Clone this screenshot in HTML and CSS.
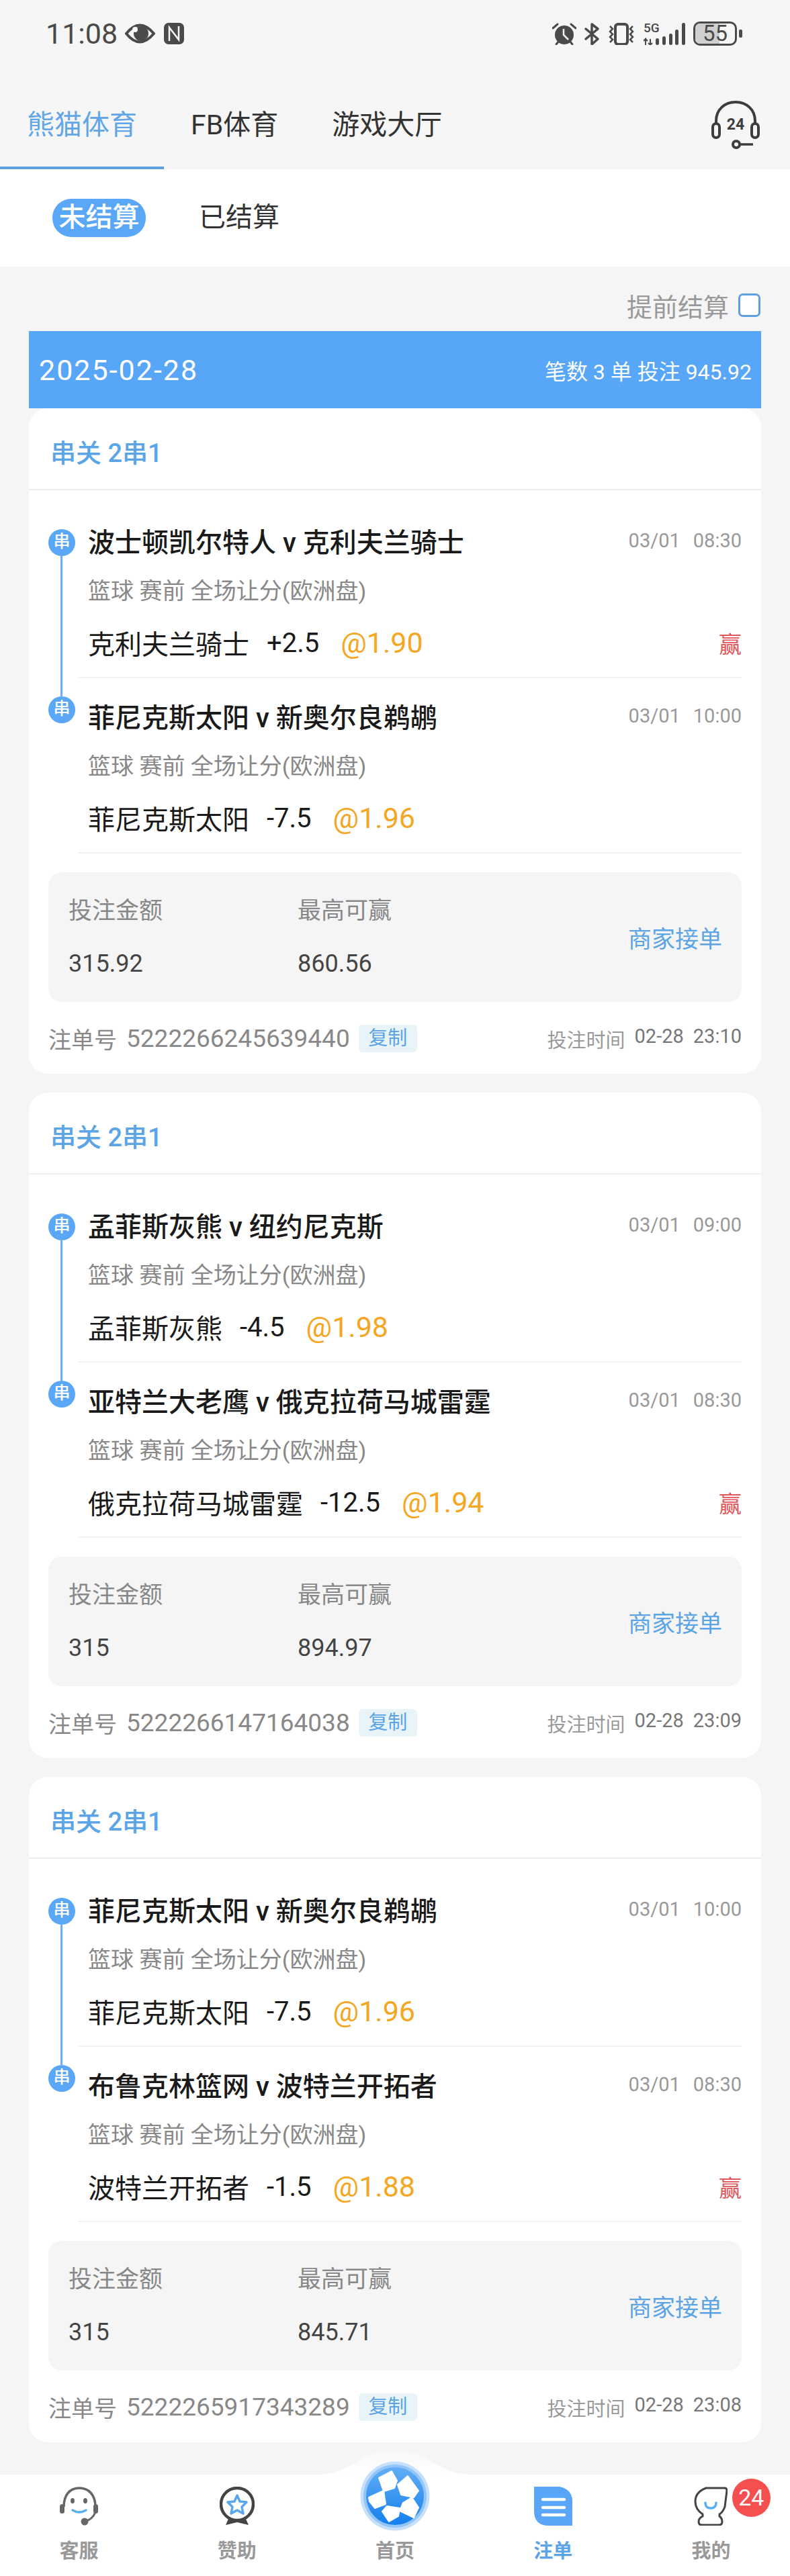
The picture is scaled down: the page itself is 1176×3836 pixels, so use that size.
FILE: index.html
```html
<!DOCTYPE html>
<html lang="zh-CN">
	<head>
		<title>注单</title>
		<meta charset="utf-8">
		<meta name="viewport" content="width=device-width, user-scalable=no, minimum-scale=1.0, maximum-scale=1.0">
		<link rel="stylesheet" href="styles.css">
	</head>

	<body>
		<div id="page">

			<div class="status">
				<span class="clock">11:08</span>
				<svg class="ico-eye" viewBox="0 0 45 32"><path d="M2 16 Q22 -9 43 16 Q22 41 2 16 Z" fill="none" stroke="#4a4a4a" stroke-width="4"/><circle cx="24" cy="16" r="11" fill="#4a4a4a"/><circle cx="15" cy="10" r="4" fill="#f6f6f6"/></svg>
				<svg class="ico-nfc" viewBox="0 0 30 32"><rect width="30" height="32" rx="7" fill="#4a4a4a"/><path d="M8 27 V7 L22 25 V5" fill="none" stroke="#f6f6f6" stroke-width="2.5"/></svg>
				<div class="status-right">
					<svg class="ico-alarm" viewBox="0 0 36 33"><circle cx="18" cy="18" r="14" fill="#4a4a4a"/><path d="M17 9 V18 L24 25" fill="none" stroke="#f6f6f6" stroke-width="2.5"/><path d="M1 8 L8 2 M35 8 L28 2 M6 32 L10 27 M30 32 L26 27" stroke="#4a4a4a" stroke-width="3" stroke-linecap="round"/></svg>
					<svg class="ico-bt" viewBox="0 0 22 33"><path d="M2 9 L20 24 L11 32 V2 L20 9 L2 24" fill="none" stroke="#4a4a4a" stroke-width="3.5" stroke-linejoin="round" stroke-linecap="round"/></svg>
					<svg class="ico-vibe" viewBox="0 0 40 33"><rect x="11" y="2" width="18" height="30" rx="4" fill="none" stroke="#4a4a4a" stroke-width="4"/><path d="M3 5 L7 9 L3 13 L7 17 L3 21 L7 25 L3 29 M37 5 L33 9 L37 13 L33 17 L37 21 L33 25 L37 29" fill="none" stroke="#4a4a4a" stroke-width="2.5"/></svg>
					<div class="signal">
						<span class="signal-g">5G</span>
						<svg viewBox="0 0 64 33"><path d="M3 33 V24 L0 27 M3 24 L6 27 M10 24 V33 L7 30 M10 33 L13 30" fill="none" stroke="#4a4a4a" stroke-width="2"/><g fill="#4a4a4a"><rect x="18" y="23" width="5" height="10" rx="2.5"/><rect x="28" y="20" width="5" height="13" rx="2.5"/><rect x="38" y="16" width="5" height="17" rx="2.5"/><rect x="47" y="10" width="5" height="23" rx="2.5"/><rect x="57" y="0" width="5" height="33" rx="2.5"/></g></svg>
					</div>
					<div class="batt"><div class="batt-fill"></div><span>55</span></div>
				</div>
			</div>

			<div class="tabs">
				<div class="tab active">熊猫体育</div>
				<div class="tab">FB体育</div>
				<div class="tab">游戏大厅</div>
				<svg class="ico-service" viewBox="0 0 72 72">
					<path d="M7 36 V30 C7 13 20 2 36 2 C52 2 65 13 65 30 V36" fill="none" stroke="#3d3d3d" stroke-width="4"/>
					<rect x="2" y="34" width="10" height="21" rx="5" fill="none" stroke="#3d3d3d" stroke-width="4"/>
					<rect x="60" y="34" width="10" height="21" rx="5" fill="none" stroke="#3d3d3d" stroke-width="4"/>
					<text x="36" y="43" class="ico-24">24</text>
					<circle cx="37" cy="65" r="5" fill="none" stroke="#3d3d3d" stroke-width="4"/>
					<path d="M42 65 H62" stroke="#3d3d3d" stroke-width="3.5"/>
				</svg>
			</div>

			<div class="segment">
				<span class="seg on">未结算</span>
				<span class="seg">已结算</span>
			</div>

			<div class="early">
				<span>提前结算</span>
				<i class="check"></i>
			</div>

			<div class="list">
				<div class="band">
					<span class="band-date">2025-02-28</span>
					<span class="band-sum">笔数 3 单 投注 945.92</span>
				</div>

				<div class="card">
					<div class="card-head">串关 2串1</div>
					<div class="legs">
						<div class="leg leg-first">
							<b class="dot">串</b>
							<div class="row"><span class="match">波士顿凯尔特人 v 克利夫兰骑士</span><span class="when"><span>03/01</span><span>08:30</span></span></div>
							<div class="market">篮球 赛前 全场让分(欧洲盘)</div>
							<div class="row"><span class="pick"><span>克利夫兰骑士</span><span>+2.5</span><em>@1.90</em></span><span class="won">赢</span></div>
						</div>
						<div class="leg leg-last">
							<b class="dot">串</b>
							<div class="row"><span class="match">菲尼克斯太阳 v 新奥尔良鹈鹕</span><span class="when"><span>03/01</span><span>10:00</span></span></div>
							<div class="market">篮球 赛前 全场让分(欧洲盘)</div>
							<div class="row"><span class="pick"><span>菲尼克斯太阳</span><span>-7.5</span><em>@1.96</em></span></div>
						</div>
					</div>
					<div class="box">
						<div class="col"><span class="col-label">投注金额</span><span class="col-value">315.92</span></div>
						<div class="col"><span class="col-label">最高可赢</span><span class="col-value">860.56</span></div>
						<span class="seller">商家接单</span>
					</div>
					<div class="foot">
						<span class="foot-label">注单号</span><span class="foot-no">5222266245639440</span><span class="copy">复制</span>
						<span class="foot-time"><span>投注时间</span><span>02-28</span><span>23:10</span></span>
					</div>
				</div>

				<div class="card">
					<div class="card-head">串关 2串1</div>
					<div class="legs">
						<div class="leg leg-first">
							<b class="dot">串</b>
							<div class="row"><span class="match">孟菲斯灰熊 v 纽约尼克斯</span><span class="when"><span>03/01</span><span>09:00</span></span></div>
							<div class="market">篮球 赛前 全场让分(欧洲盘)</div>
							<div class="row"><span class="pick"><span>孟菲斯灰熊</span><span>-4.5</span><em>@1.98</em></span></div>
						</div>
						<div class="leg leg-last">
							<b class="dot">串</b>
							<div class="row"><span class="match">亚特兰大老鹰 v 俄克拉荷马城雷霆</span><span class="when"><span>03/01</span><span>08:30</span></span></div>
							<div class="market">篮球 赛前 全场让分(欧洲盘)</div>
							<div class="row"><span class="pick"><span>俄克拉荷马城雷霆</span><span>-12.5</span><em>@1.94</em></span><span class="won">赢</span></div>
						</div>
					</div>
					<div class="box">
						<div class="col"><span class="col-label">投注金额</span><span class="col-value">315</span></div>
						<div class="col"><span class="col-label">最高可赢</span><span class="col-value">894.97</span></div>
						<span class="seller">商家接单</span>
					</div>
					<div class="foot">
						<span class="foot-label">注单号</span><span class="foot-no">5222266147164038</span><span class="copy">复制</span>
						<span class="foot-time"><span>投注时间</span><span>02-28</span><span>23:09</span></span>
					</div>
				</div>

				<div class="card">
					<div class="card-head">串关 2串1</div>
					<div class="legs">
						<div class="leg leg-first">
							<b class="dot">串</b>
							<div class="row"><span class="match">菲尼克斯太阳 v 新奥尔良鹈鹕</span><span class="when"><span>03/01</span><span>10:00</span></span></div>
							<div class="market">篮球 赛前 全场让分(欧洲盘)</div>
							<div class="row"><span class="pick"><span>菲尼克斯太阳</span><span>-7.5</span><em>@1.96</em></span></div>
						</div>
						<div class="leg leg-last">
							<b class="dot">串</b>
							<div class="row"><span class="match">布鲁克林篮网 v 波特兰开拓者</span><span class="when"><span>03/01</span><span>08:30</span></span></div>
							<div class="market">篮球 赛前 全场让分(欧洲盘)</div>
							<div class="row"><span class="pick"><span>波特兰开拓者</span><span>-1.5</span><em>@1.88</em></span><span class="won">赢</span></div>
						</div>
					</div>
					<div class="box">
						<div class="col"><span class="col-label">投注金额</span><span class="col-value">315</span></div>
						<div class="col"><span class="col-label">最高可赢</span><span class="col-value">845.71</span></div>
						<span class="seller">商家接单</span>
					</div>
					<div class="foot">
						<span class="foot-label">注单号</span><span class="foot-no">5222265917343289</span><span class="copy">复制</span>
						<span class="foot-time"><span>投注时间</span><span>02-28</span><span>23:08</span></span>
					</div>
				</div>
			</div>

			<div class="nav">
				<svg class="hump" viewBox="0 0 225 36"><defs><linearGradient id="humpfill" x1="0" y1="0" x2="0" y2="1"><stop offset="0" stop-color="#f8f8f8"/><stop offset="1" stop-color="#ffffff"/></linearGradient></defs><path d="M0 36 C45 36 62 0 112 0 C163 0 180 36 225 36 Z" fill="url(#humpfill)"/></svg>

				<div class="nav-item">
					<svg class="nav-ico" viewBox="0 0 58 58">
						<path d="M6 30 C6 12 15 2 29 2 C43 2 53 12 53 30" fill="none" stroke="#666" stroke-width="3.5"/>
						<rect x="0" y="26" width="7" height="14" rx="3.5" fill="#666"/>
						<rect x="50" y="26" width="7" height="14" rx="3.5" fill="#666"/>
						<path d="M53 38 C50 46 44 50 37 52" fill="none" stroke="#666" stroke-width="3"/>
						<circle cx="37" cy="52" r="5.5" fill="#666"/>
						<ellipse cx="19" cy="21" rx="3" ry="4" fill="#666"/>
						<ellipse cx="38" cy="21" rx="3" ry="4" fill="#666"/>
						<path d="M19 35 Q29 41 39 35" fill="none" stroke="#5ab0ec" stroke-width="3.5" stroke-linecap="round"/>
					</svg>
					<span>客服</span>
				</div>
				<div class="nav-item">
					<svg class="nav-ico" viewBox="0 0 52 58">
						<circle cx="26" cy="26" r="24" fill="none" stroke="#444" stroke-width="4.5"/>
						<path d="M26 13 L30 22 L40 23 L33 30 L35 40 L26 35 L17 40 L19 30 L12 23 L22 22 Z" fill="none" stroke="#5aa5ef" stroke-width="3.5" stroke-linejoin="round"/>
						<path d="M9 57 L14 46 L26 52 L38 46 L43 57 L26 53 Z" fill="#444"/>
					</svg>
					<span>赞助</span>
				</div>
				<div class="nav-item">
					<div class="nav-ico"></div>
					<svg class="ball" viewBox="-52 -52 104 104">
						<defs><linearGradient id="ballfill" x1="0" y1="0" x2="0" y2="1"><stop offset="0" stop-color="#62aef6"/><stop offset="1" stop-color="#1480ec"/></linearGradient></defs>
						<circle r="51.5" fill="#c6e0fb"/>
						<circle r="47" fill="#93c5f8"/>
						<circle r="43" fill="url(#ballfill)"/>
						<g fill="#fff" stroke="#fff" stroke-width="2" stroke-linejoin="round">
							<path d="M-24 -27 L-5 -37 L3 -23 L-1 -12 L-17 -7 Z"/>
							<path d="M4 -17 L19 -30 L35 -8 L28 2 L9 -2 Z"/>
							<path d="M-39 2 L-17 -8 L-14 12 L-30 18 L-38 8 Z"/>
							<path d="M-19 23 L-12 15 L7 18 L5 30 L-9 38 Z"/>
							<path d="M12 10 L25 2 L35 17 L28 32 L7 22 Z"/>
						</g>
					</svg>
					<span>首页</span>
				</div>
				<div class="nav-item on">
					<svg class="nav-ico" viewBox="0 0 57 58">
						<path d="M0 0 H38 Q57 4 57 22 V58 H22 Q0 58 0 36 Z" fill="#59a6f8"/>
						<path d="M13 19 H45 M13 31 H45 M13 42 H45" stroke="#fff" stroke-width="4.5" stroke-linecap="round"/>
					</svg>
					<span>注单</span>
				</div>
				<div class="nav-item">
					<svg class="nav-ico" viewBox="0 0 50 58">
						<path d="M18 2 L46 2 Q49 2 49 6 L46 30 Q43 38 38 41 L38 44 Q42 47 42 52 Q42 57 37 57 L12 57 Q7 57 7 52 Q7 47 13 44 L13 41 Q2 34 2 22 Q2 8 18 2 Z" fill="none" stroke="#444" stroke-width="3"/>
						<path d="M17 24 Q17 32 25 32 Q33 32 33 24" fill="none" stroke="#5ab0ec" stroke-width="3.5" stroke-linecap="round"/>
					</svg>
					<span>我的</span>
					<b class="badge">24</b>
				</div>
			</div>

		</div>
	</body>
</html>
```

FILE: styles.css
```css
* {
	box-sizing: border-box;
}

body {
	margin: 0;
	background: #f5f5f5;
	font-family: Roboto, "Noto Sans CJK SC", sans-serif;
}

#page {
	width: 1176px;
	height: 3836px;
	display: flex;
	flex-direction: column;
	overflow: hidden;
}

/* status bar */
.status {
	height: 100px;
	padding: 0 71px 0 68px;
	background: #f6f6f6;
	display: flex;
	align-items: center;
	color: #4a4a4a;
}

.clock {
	font-size: 43px;
	margin-right: 11px;
}

.ico-eye { width: 45px; height: 32px; margin-right: 13px; }
.ico-nfc { width: 30px; height: 32px; }

.status-right {
	margin-left: auto;
	display: flex;
	align-items: center;
}

.ico-alarm { width: 36px; height: 33px; margin-right: 12px; }
.ico-bt { width: 22px; height: 33px; margin-right: 13px; }
.ico-vibe { width: 40px; height: 33px; margin-right: 13px; }

.signal {
	width: 64px;
	height: 33px;
	position: relative;
	margin-right: 10px;
}

.signal svg {
	display: block;
	width: 64px;
	height: 33px;
}

.signal-g {
	position: absolute;
	left: 0;
	top: -2px;
	font-size: 19px;
	line-height: 20px;
	font-weight: 500;
}

.batt {
	width: 65px;
	height: 36px;
	border: 3px solid #4a4a4a;
	border-radius: 10px;
	position: relative;
	font-size: 33px;
	text-align: center;
	line-height: 30px;
	margin-right: 8px;
}

.batt span {
	position: relative;
}

.batt-fill {
	position: absolute;
	left: 0;
	top: 0;
	bottom: 0;
	width: 36px;
	background: #d0d0d0;
	border-radius: 7px 0 0 7px;
}

.batt::after {
	content: "";
	position: absolute;
	right: -11px;
	top: 9px;
	width: 5px;
	height: 12px;
	border-radius: 2px;
	background: #4a4a4a;
}

/* top tabs */
.tabs {
	height: 152px;
	padding-right: 45px;
	background: #f6f6f6;
	display: flex;
}

.tab {
	height: 152px;
	padding: 58px 40px 0;
	font-size: 41px;
	line-height: 56px;
	color: #333;
}

.tab.active {
	color: #62a6e8;
	border-bottom: 4px solid #5d9fe0;
}

.ico-service {
	width: 72px;
	height: 72px;
	margin: 50px 0 0 auto;
}

.ico-24 {
	font-size: 23px;
	font-weight: 700;
	fill: #3d3d3d;
	text-anchor: middle;
}

/* settled / unsettled */
.segment {
	height: 145px;
	background: #fff;
	padding-left: 78px;
	display: flex;
	align-items: center;
	gap: 79px;
	font-size: 40px;
	color: #333;
}

.seg {
	height: 57px;
	line-height: 55px;
}

.seg.on {
	width: 139px;
	border-radius: 28px;
	background: #5aa7f8;
	color: #fff;
	text-align: center;
	font-weight: 500;
}

.early {
	height: 96px;
	padding: 18px 44px 0 0;
	display: flex;
	align-items: center;
	justify-content: flex-end;
	gap: 14px;
	font-size: 38px;
	color: #999;
}

.check {
	width: 33px;
	height: 35px;
	border: 3px solid #5d9fe0;
	border-radius: 7px;
	background: #fff;
}

.list {
	flex: 1;
	min-height: 0;
	overflow: hidden;
	padding: 0 43px;
}

.band {
	height: 115px;
	padding: 0 14px 0 15px;
	background: #58a6f8;
	color: #fff;
	display: flex;
	align-items: center;
	justify-content: space-between;
}

.band-date {
	font-size: 43px;
	letter-spacing: 2px;
}

.band-sum {
	font-size: 32px;
}

/* bet card */
.card {
	height: 991px;
	margin-bottom: 28px;
	background: #fff;
	border-radius: 28px;
}

.card-head {
	height: 122px;
	padding: 39px 0 0 32px;
	border-bottom: 2px solid #eee;
	font-size: 38px;
	line-height: 56px;
	font-weight: 500;
	color: #5ba4e6;
}

.legs {
	margin: 19px 29px 0 73px;
}

.leg {
	position: relative;
	padding: 31px 0 26px 15px;
	border-bottom: 2px solid #f2f2f2;
}

.dot {
	position: absolute;
	left: -44px;
	width: 40px;
	height: 40px;
	border-radius: 50%;
	background: #5aa7f8;
	color: #fff;
	font-size: 25px;
	font-weight: 500;
	line-height: 38px;
	text-align: center;
}

.leg-first .dot { top: 39px; }
.leg-last .dot { top: 27px; }

.leg-first::before {
	content: "";
	position: absolute;
	left: -26px;
	top: 79px;
	width: 3px;
	height: 209px;
	background: #6fb0f2;
}

.row {
	height: 50px;
	display: flex;
	align-items: center;
	justify-content: space-between;
}

.match {
	font-size: 40px;
	font-weight: 500;
	color: #1a1a1a;
}

.when {
	display: flex;
	gap: 19px;
	font-size: 29px;
	color: #999;
}

.market {
	height: 50px;
	margin: 25px 0 27px;
	font-size: 34px;
	line-height: 50px;
	color: #888;
}

.pick {
	display: flex;
	align-items: center;
	gap: 26px;
	font-size: 40px;
	color: #1a1a1a;
}

.pick em {
	margin-left: 6px;
	font-style: normal;
	font-size: 43px;
	color: #f5a623;
}

.won {
	font-size: 34px;
	color: #e0565b;
}

.box {
	height: 193px;
	margin: 28px 29px 0;
	padding: 0 29px 0 30px;
	border-radius: 20px;
	background: #f5f5f5;
	display: flex;
	align-items: center;
}

.col {
	width: 341px;
	display: flex;
	flex-direction: column;
	gap: 28px;
}

.col-label {
	font-size: 35px;
	line-height: 50px;
	color: #888;
}

.col-value {
	font-size: 36px;
	line-height: 50px;
	color: #444;
}

.seller {
	margin-left: auto;
	font-size: 35px;
	color: #5ba4e6;
}

.foot {
	margin: 34px 29px 0;
	height: 41px;
	display: flex;
	align-items: center;
	color: #888;
}

.foot-label {
	font-size: 34px;
	margin-right: 14px;
}

.foot-no {
	font-size: 37px;
	margin-right: 13px;
}

.copy {
	width: 87px;
	height: 41px;
	border-radius: 6px;
	background: #e8f4f8;
	color: #5ba4e6;
	font-size: 29px;
	line-height: 40px;
	text-align: center;
}

.foot-time {
	margin-left: auto;
	display: flex;
	gap: 14px;
	font-size: 29px;
	color: #999;
}

.foot-time span + span {
	color: #777;
}

/* bottom nav */
.nav {
	height: 151px;
	background: #fff;
	display: flex;
	position: relative;
}

.hump {
	position: absolute;
	left: 475px;
	top: -36px;
	width: 225px;
	height: 36px;
}

.nav-item {
	flex: 1;
	padding-top: 18px;
	position: relative;
	display: flex;
	flex-direction: column;
	align-items: center;
	font-size: 29px;
	font-weight: 700;
	color: #999;
}

.nav-item.on {
	color: #5ba4e6;
}

.nav-ico {
	height: 58px;
	margin-bottom: 14px;
}

.ball {
	position: absolute;
	left: 66px;
	top: -20px;
	width: 104px;
	height: 104px;
}

.badge {
	position: absolute;
	left: 149px;
	top: 6px;
	width: 57px;
	height: 57px;
	border-radius: 50%;
	background: #f54f4f;
	color: #fff;
	font-size: 34px;
	font-weight: 400;
	line-height: 57px;
	text-align: center;
}
```
